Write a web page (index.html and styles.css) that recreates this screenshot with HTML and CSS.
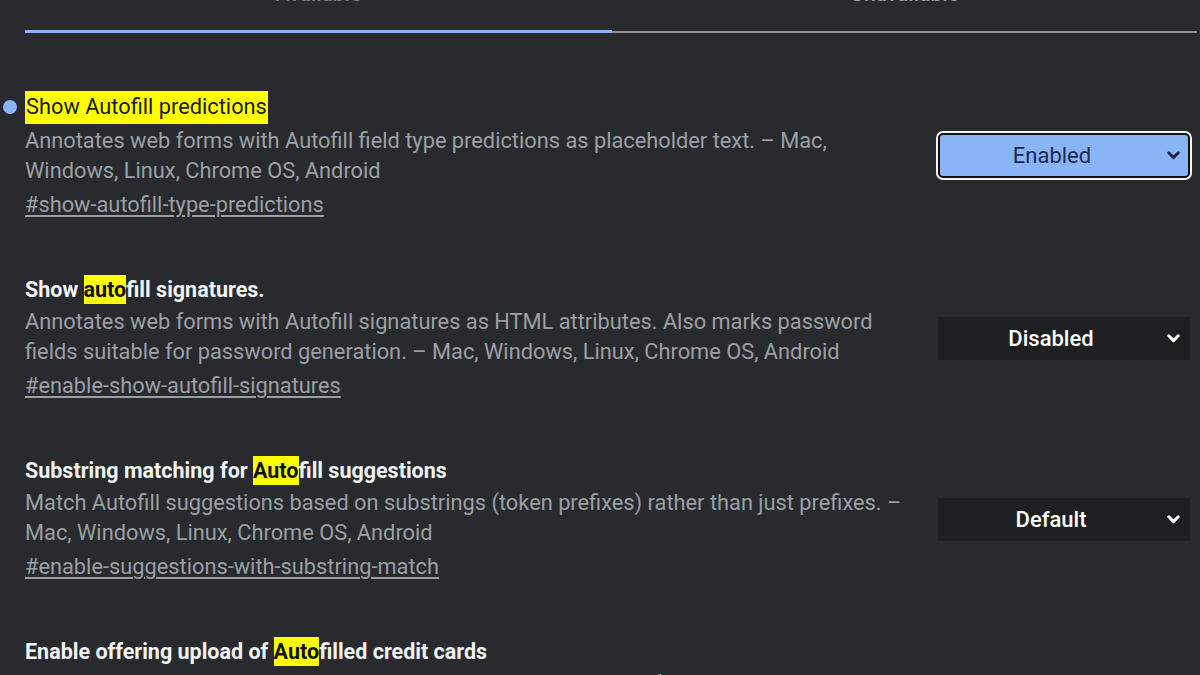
FILE: index.html
```html
<!DOCTYPE html>
<html lang="en">
<head>
<meta charset="utf-8">
<title>Experiments</title>
<link rel="stylesheet" href="styles.css">
</head>
<body>
<div class="tabs">
  <div class="tab tab-active">Available</div>
  <div class="tab">Unavailable</div>
</div>
<main class="flags">
  <section class="flag">
    <div class="flag-text">
      <h3 class="flag-title flag-title-ref"><span class="dot"></span><span class="ref-hl">Show Autofill predictions</span></h3>
      <p class="flag-desc">Annotates web forms with Autofill field type predictions as placeholder text. – Mac, Windows, Linux, Chrome OS, Android</p>
      <a class="flag-link" href="#show-autofill-type-predictions">#show-autofill-type-predictions</a>
    </div>
    <div class="select select-enabled"><span class="select-label">Enabled</span><svg class="chev" viewBox="0 0 13 9" width="13" height="9"><polyline points="1.8,1.8 6.5,6.6 11.2,1.8" fill="none" stroke="currentColor" stroke-width="3" stroke-linecap="round" stroke-linejoin="round"/></svg></div>
  </section>
  <section class="flag">
    <div class="flag-text">
      <h3 class="flag-title">Show <mark class="hl">auto</mark>fill signatures.</h3>
      <p class="flag-desc">Annotates web forms with Autofill signatures as HTML attributes. Also marks password fields suitable for password generation. – Mac, Windows, Linux, Chrome OS, Android</p>
      <a class="flag-link" href="#enable-show-autofill-signatures">#enable-show-autofill-signatures</a>
    </div>
    <div class="select"><span class="select-label">Disabled</span><svg class="chev" viewBox="0 0 13 9" width="13" height="9"><polyline points="1.8,1.8 6.5,6.6 11.2,1.8" fill="none" stroke="currentColor" stroke-width="3" stroke-linecap="round" stroke-linejoin="round"/></svg></div>
  </section>
  <section class="flag">
    <div class="flag-text">
      <h3 class="flag-title">Substring matching for <mark class="hl">Auto</mark>fill suggestions</h3>
      <p class="flag-desc">Match Autofill suggestions based on substrings (token prefixes) rather than just prefixes. – Mac, Windows, Linux, Chrome OS, Android</p>
      <a class="flag-link" href="#enable-suggestions-with-substring-match">#enable-suggestions-with-substring-match</a>
    </div>
    <div class="select"><span class="select-label">Default</span><svg class="chev" viewBox="0 0 13 9" width="13" height="9"><polyline points="1.8,1.8 6.5,6.6 11.2,1.8" fill="none" stroke="currentColor" stroke-width="3" stroke-linecap="round" stroke-linejoin="round"/></svg></div>
  </section>
  <section class="flag">
    <div class="flag-text">
      <h3 class="flag-title">Enable offering upload of <mark class="hl">Auto</mark>filled credit cards</h3>
      <p class="flag-desc">Enables a new option to upload credit cards to Google Payments for sync to all Chrome devices. – Mac, Windows, Linux, Chrome OS, Android</p>
      <a class="flag-link" href="#enable-autofill-credit-card-upload">#enable-autofill-credit-card-upload</a>
    </div>
    <div class="select"><span class="select-label">Default</span><svg class="chev" viewBox="0 0 13 9" width="13" height="9"><polyline points="1.8,1.8 6.5,6.6 11.2,1.8" fill="none" stroke="currentColor" stroke-width="3" stroke-linecap="round" stroke-linejoin="round"/></svg></div>
  </section>
</main>
</body>
</html>
```
FILE: styles.css
```css
html, body {
  margin: 0;
  padding: 0;
}
body {
  background: #292a2d;
  font-family: Roboto, "Liberation Sans", Arial, sans-serif;
  color: #e8eaed;
  width: 1200px;
  height: 675px;
  overflow: hidden;
}
.tabs {
  display: grid;
  grid-template-columns: 587px 585px;
  margin: -18px 0 0 25px;
}
.tab {
  font-size: 21px;
  line-height: 24px;
  font-weight: 500;
  text-align: center;
  color: #9aa0a6;
  padding-bottom: 25px;
  border-bottom: 2px solid #8f9499;
}
.tab-active {
  color: #7d8590;
  border-bottom: 3px solid #8ab4f8;
  padding-bottom: 24px;
}
.flags {
  padding: 58px 10px 0 25px;
  display: flex;
  flex-direction: column;
  gap: 55px;
}
.flag {
  display: flex;
  align-items: center;
  gap: 25px;
}
.flag-text {
  flex: 0 0 888px;
  display: flex;
  flex-direction: column;
  align-items: flex-start;
}
.flag-title {
  position: relative;
  margin: 0;
  font-size: 21.5px;
  line-height: 30px;
  font-weight: 700;
  color: #f1f3f4;
}
.flag-title-ref {
  font-weight: 400;
  font-size: 21.8px;
}
.ref-hl {
  background: #ffff00;
  color: #1a1a1a;
  display: inline-block;
  padding: 1px 1px 2px 1px;
  line-height: 30px;
}
.dot {
  position: absolute;
  left: -22px;
  top: 9px;
  width: 14px;
  height: 14px;
  border-radius: 50%;
  background: #8ab4f8;
}
.hl {
  background: #ffff00;
  color: #111;
  padding: 2px 0;
}
.flag-desc {
  margin: 2px 0 0;
  font-size: 21.8px;
  line-height: 30px;
  color: #9aa0a6;
}
.flag-link {
  margin-top: 4px;
  font-size: 21.8px;
  line-height: 30px;
  color: #9aa0a6;
  text-decoration: underline;
  text-underline-offset: 3px;
}
.select {
  box-sizing: border-box;
  width: 252px;
  height: 43px;
  display: flex;
  align-items: center;
  padding-right: 10px;
  background: #1e1f21;
  color: #ffffff;
  font-size: 22px;
  font-weight: 500;
}
.select-label {
  flex: 1;
  text-align: center;
}
.chev {
  margin-left: 3px;
  flex: none;
}
.select-enabled {
  background: #8ab4f8;
  color: #1d2a4a;
  font-weight: 400;
  border: 2px solid #111;
  border-radius: 5px;
  outline: 2px solid #f5f5f5;
  height: 45px;
  padding-right: 8px;
}
```
